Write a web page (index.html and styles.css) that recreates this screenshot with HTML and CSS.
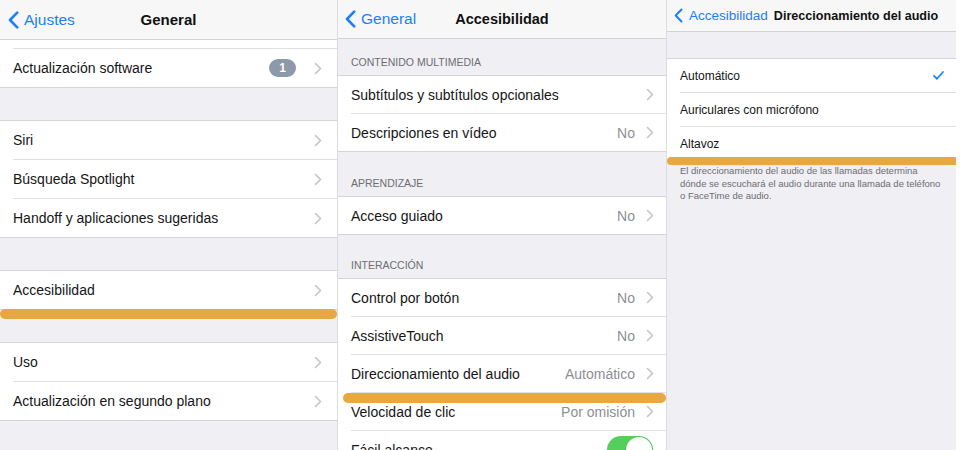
FILE: index.html
```html
<!DOCTYPE html>
<html lang="es">
<head>
<meta charset="utf-8">
<title>Ajustes</title>
<link rel="stylesheet" href="styles.css">
</head>
<body>
<div class="screen">

  <!-- Panel 1: General -->
  <section class="panel p-general">
    <header class="nav">
      <div class="back">
        <svg class="back-chev" viewBox="0 0 11 18"><path d="M9.2 1.6 L2 9 L9.2 16.4"/></svg>
        <span>Ajustes</span>
      </div>
      <h1 class="title">General</h1>
      <div></div>
    </header>

    <div class="group group-open">
      <div class="row"><div class="cell cell-stub"></div></div>
      <div class="row"><div class="cell">
        <span class="label">Actualización software</span>
        <span class="badge">1</span>
        <svg class="chev" viewBox="0 0 8 13"><path d="M1.5 1.5 L6.5 6.5 L1.5 11.5"/></svg>
      </div></div>
    </div>

    <div class="spacer"></div>

    <div class="group">
      <div class="row"><div class="cell">
        <span class="label">Siri</span>
        <svg class="chev" viewBox="0 0 8 13"><path d="M1.5 1.5 L6.5 6.5 L1.5 11.5"/></svg>
      </div></div>
      <div class="row"><div class="cell">
        <span class="label">Búsqueda Spotlight</span>
        <svg class="chev" viewBox="0 0 8 13"><path d="M1.5 1.5 L6.5 6.5 L1.5 11.5"/></svg>
      </div></div>
      <div class="row"><div class="cell">
        <span class="label">Handoff y aplicaciones sugeridas</span>
        <svg class="chev" viewBox="0 0 8 13"><path d="M1.5 1.5 L6.5 6.5 L1.5 11.5"/></svg>
      </div></div>
    </div>

    <div class="spacer"></div>

    <div class="group">
      <div class="row"><div class="cell">
        <span class="label">Accesibilidad</span>
        <svg class="chev" viewBox="0 0 8 13"><path d="M1.5 1.5 L6.5 6.5 L1.5 11.5"/></svg>
      </div>
      <span class="mark mark-general"></span></div>
    </div>

    <div class="spacer"></div>

    <div class="group">
      <div class="row"><div class="cell">
        <span class="label">Uso</span>
        <svg class="chev" viewBox="0 0 8 13"><path d="M1.5 1.5 L6.5 6.5 L1.5 11.5"/></svg>
      </div></div>
      <div class="row"><div class="cell">
        <span class="label">Actualización en segundo plano</span>
        <svg class="chev" viewBox="0 0 8 13"><path d="M1.5 1.5 L6.5 6.5 L1.5 11.5"/></svg>
      </div></div>
    </div>
  </section>

  <!-- Panel 2: Accesibilidad -->
  <section class="panel p-access">
    <header class="nav">
      <div class="back">
        <svg class="back-chev" viewBox="0 0 11 18"><path d="M9.2 1.6 L2 9 L9.2 16.4"/></svg>
        <span>General</span>
      </div>
      <h1 class="title">Accesibilidad</h1>
      <div></div>
    </header>

    <div class="section-head head-first">Contenido multimedia</div>
    <div class="group">
      <div class="row"><div class="cell">
        <span class="label">Subtítulos y subtítulos opcionales</span>
        <svg class="chev" viewBox="0 0 8 13"><path d="M1.5 1.5 L6.5 6.5 L1.5 11.5"/></svg>
      </div></div>
      <div class="row"><div class="cell">
        <span class="label">Descripciones en vídeo</span>
        <span class="value">No</span>
        <svg class="chev" viewBox="0 0 8 13"><path d="M1.5 1.5 L6.5 6.5 L1.5 11.5"/></svg>
      </div></div>
    </div>

    <div class="section-head">Aprendizaje</div>
    <div class="group">
      <div class="row"><div class="cell">
        <span class="label">Acceso guiado</span>
        <span class="value">No</span>
        <svg class="chev" viewBox="0 0 8 13"><path d="M1.5 1.5 L6.5 6.5 L1.5 11.5"/></svg>
      </div></div>
    </div>

    <div class="section-head head-short">Interacción</div>
    <div class="group">
      <div class="row"><div class="cell">
        <span class="label">Control por botón</span>
        <span class="value">No</span>
        <svg class="chev" viewBox="0 0 8 13"><path d="M1.5 1.5 L6.5 6.5 L1.5 11.5"/></svg>
      </div></div>
      <div class="row"><div class="cell">
        <span class="label">AssistiveTouch</span>
        <span class="value">No</span>
        <svg class="chev" viewBox="0 0 8 13"><path d="M1.5 1.5 L6.5 6.5 L1.5 11.5"/></svg>
      </div></div>
      <div class="row"><div class="cell">
        <span class="label">Direccionamiento del audio</span>
        <span class="value">Automático</span>
        <svg class="chev" viewBox="0 0 8 13"><path d="M1.5 1.5 L6.5 6.5 L1.5 11.5"/></svg>
      </div>
      <span class="mark mark-access"></span></div>
      <div class="row"><div class="cell">
        <span class="label">Velocidad de clic</span>
        <span class="value">Por omisión</span>
        <svg class="chev" viewBox="0 0 8 13"><path d="M1.5 1.5 L6.5 6.5 L1.5 11.5"/></svg>
      </div></div>
      <div class="row"><div class="cell">
        <span class="label">Fácil alcance</span>
        <span class="switch"><span class="knob"></span></span>
      </div></div>
    </div>
  </section>

  <!-- Panel 3: Direccionamiento del audio -->
  <section class="panel p-audio">
    <header class="nav nav-compact">
      <div class="back">
        <svg class="back-chev" viewBox="0 0 11 18"><path d="M9.2 1.6 L2 9 L9.2 16.4"/></svg>
        <span>Accesibilidad</span>
      </div>
      <h1 class="title">Direccionamiento del audio</h1>
    </header>

    <div class="spacer-audio"></div>

    <div class="group">
      <div class="row"><div class="cell">
        <span class="label">Automático</span>
        <svg class="check" viewBox="0 0 11 9"><path d="M1 4.8 L4 7.8 L10 1"/></svg>
      </div></div>
      <div class="row"><div class="cell">
        <span class="label">Auriculares con micrófono</span>
      </div></div>
      <div class="row"><div class="cell">
        <span class="label">Altavoz</span>
      </div>
      <span class="mark mark-audio"></span></div>
    </div>

    <p class="footnote">El direccionamiento del audio de las llamadas determina<br>dónde se escuchará el audio durante una llamada de teléfono<br>o FaceTime de audio.</p>
  </section>

</div>
</body>
</html>
```

FILE: styles.css
```css
html, body {
  margin: 0;
  padding: 0;
  background: #ffffff;
}

body {
  font-family: "Liberation Sans", Arial, sans-serif;
  color: #151515;
}

.screen {
  display: flex;
  width: 960px;
  height: 450px;
  overflow: hidden;
}

.panel {
  flex: none;
  display: flex;
  flex-direction: column;
  background: #efeff4;
  overflow: hidden;
}

.p-general {
  width: 337px;
  border-right: 1px solid #dcdce0;
}

.p-access {
  width: 328px;
  border-right: 1px solid #dcdce0;
}

.p-audio {
  width: 289px;
}

/* Navigation bars */
.nav {
  flex: none;
  display: grid;
  grid-template-columns: 1fr auto 1fr;
  align-items: center;
  background: #f7f7f8;
  border-bottom: 1px solid #d2d2d6;
  padding: 0 8px;
}

.p-general .nav {
  height: 39px;
}

.p-access .nav {
  height: 38px;
  padding: 0 7px;
}

.back {
  display: flex;
  align-items: center;
  gap: 5px;
  color: #1a7ff8;
  font-size: 15.5px;
}

.back-chev {
  width: 11px;
  height: 18px;
  fill: none;
  stroke: currentColor;
  stroke-width: 2.6;
  stroke-linecap: round;
  stroke-linejoin: round;
}

.title {
  margin: 0;
  font-size: 15px;
  font-weight: bold;
  color: #111111;
}

.p-access .title {
  font-size: 14.5px;
}

.nav-compact {
  display: flex;
  height: 31px;
  padding: 0 0 0 7px;
}

.nav-compact .back {
  font-size: 13.5px;
  gap: 6px;
}

.nav-compact .back-chev {
  width: 9px;
  height: 15px;
  stroke-width: 2.4;
}

.nav-compact .title {
  font-size: 12.6px;
  margin-left: 6px;
}

/* Groups and rows */
.group {
  flex: none;
  background: #ffffff;
  border-top: 1px solid #d4d4d8;
  border-bottom: 1px solid #d4d4d8;
}

.group-open {
  border-top: none;
}

.row {
  position: relative;
  padding-left: 13px;
}

.cell {
  display: flex;
  align-items: center;
  height: 38px;
  padding-right: 15px;
  border-bottom: 1px solid #e0e0e4;
  font-size: 14px;
}

.row:last-child .cell {
  border-bottom: none;
}

.cell-stub {
  height: 8px;
}

.p-access .cell {
  height: 37px;
  padding-right: 12px;
}

.p-audio .cell {
  height: 33px;
  padding-right: 12px;
  font-size: 12px;
}

.label {
  flex: 1;
  white-space: nowrap;
}

.value {
  color: #8e8e93;
  margin-right: 12px;
}

.p-access .value {
  margin-right: 11px;
}

.chev {
  flex: none;
  width: 8px;
  height: 13px;
  fill: none;
  stroke: #c4c4c9;
  stroke-width: 1.6;
  stroke-linecap: round;
  stroke-linejoin: round;
}

.badge {
  flex: none;
  width: 27px;
  height: 18px;
  border-radius: 9px;
  background: #8d98aa;
  color: #ffffff;
  font-size: 12px;
  font-weight: bold;
  display: flex;
  align-items: center;
  justify-content: center;
  margin-right: 18px;
}

.check {
  flex: none;
  width: 11px;
  height: 9px;
  fill: none;
  stroke: #1a7ff8;
  stroke-width: 1.7;
  stroke-linecap: round;
  stroke-linejoin: round;
}

.switch {
  flex: none;
  width: 46px;
  height: 28px;
  border-radius: 14px;
  background: #55cf5c;
  display: flex;
  align-items: center;
  justify-content: flex-end;
  padding: 0 1px;
  box-sizing: border-box;
  margin-right: 1px;
}

.knob {
  width: 26px;
  height: 26px;
  border-radius: 50%;
  background: #ffffff;
  box-shadow: 0 1px 2px rgba(0, 0, 0, 0.25);
}

/* Spacing between groups */
.spacer {
  flex: none;
  height: 32px;
}

.spacer-audio {
  flex: none;
  height: 26px;
}

.section-head {
  flex: none;
  box-sizing: border-box;
  height: 44px;
  display: flex;
  align-items: flex-end;
  padding: 0 0 6px 13px;
  font-size: 10.5px;
  line-height: 13px;
  color: #6d6d72;
  text-transform: uppercase;
}

.head-first {
  height: 36px;
}

.head-short {
  height: 43px;
}

.footnote {
  margin: 0;
  padding: 4px 0 0 13px;
  font-size: 9.5px;
  line-height: 12.5px;
  color: #6d6d72;
  white-space: nowrap;
}

/* Orange highlight marks drawn over the screens */
.mark {
  position: absolute;
  height: 10px;
  border-radius: 5px;
  background: #e7a93f;
  z-index: 2;
}

.mark-general {
  left: 0;
  right: 0;
  top: 100%;
}

.mark-access {
  left: 5px;
  right: 0;
  top: 100%;
}

.mark-audio {
  left: 0;
  right: -2px;
  top: 30px;
  height: 8px;
  border-radius: 4px;
}
```
